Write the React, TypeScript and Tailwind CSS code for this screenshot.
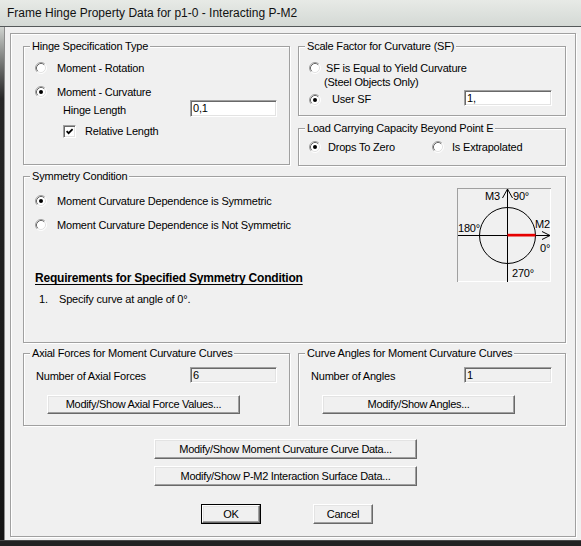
import React from 'react';

const Radio = ({ on = false, className = '' }: { on?: boolean; className?: string }) => (
  <svg width="12" height="12" viewBox="0 0 12 12" className={`shrink-0 ${className}`}>
    <circle cx="6" cy="6" r="5" fill="#ffffff" />
    <path d="M2.11 9.89A5.5 5.5 0 0 1 9.89 2.11" fill="none" stroke="#a0a0a0" />
    <path d="M9.89 2.11A5.5 5.5 0 0 1 2.11 9.89" fill="none" stroke="#ffffff" />
    <path d="M2.82 9.18A4.5 4.5 0 0 1 9.18 2.82" fill="none" stroke="#696969" />
    <path d="M9.18 2.82A4.5 4.5 0 0 1 2.82 9.18" fill="none" stroke="#e3e3e3" />
    {on && <circle cx="6" cy="6" r="2" fill="#000000" />}
  </svg>
);

const Check = ({ on = false }: { on?: boolean }) => (
  <span className="flex h-[13px] w-[13px] shrink-0 items-center justify-center border border-t-[#a0a0a0] border-l-[#a0a0a0] border-r-white border-b-white bg-white shadow-[inset_1px_1px_0_#696969,inset_-1px_-1px_0_#e3e3e3]">
    {on && (
      <svg width="7" height="7" viewBox="0 0 7 7">
        <path d="M0.6 3.2 L2.6 5.2 L6.6 1.2" fill="none" stroke="#000" strokeWidth="1.8" />
      </svg>
    )}
  </span>
);

const Edit = ({ value, className = '', ro = false }: { value: string; className?: string; ro?: boolean }) => (
  <div
    className={`flex shrink-0 items-center border border-t-[#a0a0a0] border-l-[#a0a0a0] border-r-white border-b-white pl-[2px] text-[11px] leading-[13px] shadow-[inset_1px_1px_0_#696969,inset_-1px_-1px_0_#e3e3e3] ${
      ro ? 'bg-[#f0f0f0]' : 'bg-white'
    } ${className}`}
  >
    {value}
  </div>
);

const Btn = ({ children, className = '' }: { children: React.ReactNode; className?: string }) => (
  <button
    className={`flex shrink-0 items-center justify-center border border-t-white border-l-white border-r-[#696969] border-b-[#696969] bg-[#f0f0f0] text-[11px] leading-[13px] tracking-[-0.3px] text-black shadow-[inset_-1px_-1px_0_#a0a0a0,inset_1px_1px_0_#e3e3e3] ${className}`}
  >
    {children}
  </button>
);

const Group = ({ title, className = '', children }: { title: string; className?: string; children?: React.ReactNode }) => (
  <div className={`relative shrink-0 border border-[#a0a0a0] shadow-[inset_1px_1px_0_#fff,1px_1px_0_#fff] ${className}`}>
    <span className="absolute left-[6px] top-[-7px] bg-[#f0f0f0] px-[2px] text-[11px] leading-[13px] whitespace-nowrap">{title}</span>
    {children}
  </div>
);

const Diagram = () => (
  <svg width="94" height="94" viewBox="0 0 94 94" className="mt-[11px] mr-[14px] shrink-0" fontFamily="Liberation Sans, Arial, sans-serif" fontSize="11">
    <line x1="0" y1="0.5" x2="94" y2="0.5" stroke="#a0a0a0" />
    <line x1="0.5" y1="0" x2="0.5" y2="94" stroke="#a0a0a0" />
    <line x1="93.5" y1="1" x2="93.5" y2="94" stroke="#ffffff" />
    <line x1="1" y1="93.5" x2="94" y2="93.5" stroke="#ffffff" />
    <line x1="50.5" y1="1" x2="50.5" y2="94" stroke="#000" />
    <path d="M45.5 10 L50.5 1 L55.5 10" fill="none" stroke="#000" />
    <line x1="1" y1="47.5" x2="93" y2="47.5" stroke="#000" />
    <path d="M85 43.5 L93 47.5 L85 51.5" fill="none" stroke="#000" />
    <circle cx="50.5" cy="47.5" r="28" fill="none" stroke="#000" />
    <rect x="50.5" y="45.8" width="28" height="2.7" fill="#e60000" />
    <text x="28" y="8" dominantBaseline="central">M3</text>
    <text x="56" y="8" dominantBaseline="central">90°</text>
    <text x="1" y="40" dominantBaseline="central">180°</text>
    <text x="78" y="36" dominantBaseline="central">M2</text>
    <text x="83" y="60" dominantBaseline="central">0°</text>
    <text x="55" y="85" dominantBaseline="central">270°</text>
  </svg>
);

export default function App() {
  return (
    <div className="flex h-[546px] w-[581px] flex-col overflow-hidden bg-[#1c1c1c] font-['Liberation_Sans',Arial,sans-serif] text-black">
      {/* title bar */}
      <div className="flex h-[27px] shrink-0 items-center border-b border-[#55595a] bg-linear-to-b from-[#e7eae6] to-[#d4d9d5] pl-[7px] text-[12px] text-[#111]">
        Frame Hinge Property Data for p1-0 - Interacting P-M2
      </div>

      <div className="flex h-[513px] shrink-0">
        <div className="w-[4px] bg-linear-to-b from-[#d0d4d0] via-[#262626] via-[14%] to-[#141414]" />
        <div className="flex-1 border-l border-[#8c8c8c] bg-[#f0f0f0] pt-[6px] pl-[5px] tracking-[-0.2px]">
          <div className="h-[504px] w-[566px] border border-[#a0a0a0] pt-[12px] pl-[12px] shadow-[inset_1px_1px_0_#fff,1px_1px_0_#fff]">
            {/* row 1 */}
            <div className="flex items-start gap-[8px]">
              <Group title="Hinge Specification Type" className="h-[119px] w-[267px]">
                <div className="flex flex-col pl-[11px] pr-[12px]">
                  <div className="mt-[13px] flex h-[16px] items-center">
                    <Radio />
                    <span className="ml-[10px] text-[11px] leading-[13px]">Moment - Rotation</span>
                  </div>
                  <div className="mt-[8px] flex h-[16px] items-center">
                    <Radio on />
                    <span className="ml-[10px] text-[11px] leading-[13px]">Moment - Curvature</span>
                  </div>
                  <div className="flex h-[17px] items-center">
                    <span className="ml-[28px] pt-[3px] text-[11px] leading-[13px]">Hinge Length</span>
                    <Edit value="0,1" className="ml-auto h-[17px] w-[87px]" />
                  </div>
                  <div className="mt-[8px] flex h-[13px] items-center">
                    <span className="ml-[28px]">
                      <Check on />
                    </span>
                    <span className="ml-[9px] text-[11px] leading-[13px]">Relative Length</span>
                  </div>
                </div>
              </Group>

              <div className="flex flex-col">
                <Group title="Scale Factor for Curvature (SF)" className="h-[70px] w-[268px]">
                  <div className="flex flex-col pl-[10px] pr-[13px]">
                    <div className="mt-[13px] flex h-[16px] items-center">
                      <Radio />
                      <span className="ml-[5px] text-[11px] leading-[13px]">SF is Equal to Yield Curvature</span>
                    </div>
                    <span className="ml-[15px] text-[11px] leading-[13px]">(Steel Objects Only)</span>
                    <div className="mt-[1px] flex h-[16px] items-start">
                      <Radio on className="mt-[4px]" />
                      <span className="ml-[11px] mt-[3px] text-[11px] leading-[13px]">User SF</span>
                      <Edit value="1," className="ml-auto h-[16px] w-[88px]" />
                    </div>
                  </div>
                </Group>
                <Group title="Load Carrying Capacity Beyond Point E" className="mt-[12px] h-[38px] w-[268px]">
                  <div className="mt-[10px] flex h-[16px] items-center pl-[10px]">
                    <div className="flex w-[123px] items-center">
                      <Radio on />
                      <span className="ml-[7px] text-[11px] leading-[13px]">Drops To Zero</span>
                    </div>
                    <Radio />
                    <span className="ml-[8px] text-[11px] leading-[13px]">Is Extrapolated</span>
                  </div>
                </Group>
              </div>
            </div>

            {/* symmetry */}
            <Group title="Symmetry Condition" className="mt-[10px] flex h-[167px] w-[543px]">
              <div className="flex flex-1 flex-col pl-[11px]">
                <div className="mt-[16px] flex h-[16px] items-center">
                  <Radio on />
                  <span className="ml-[10px] text-[11px] leading-[13px]">Moment Curvature Dependence is Symmetric</span>
                </div>
                <div className="mt-[8px] flex h-[16px] items-center">
                  <Radio />
                  <span className="ml-[10px] text-[11px] leading-[13px]">Moment Curvature Dependence is Not Symmetric</span>
                </div>
                <span className="mt-[38px] self-start text-[12px] font-bold leading-[15px] underline underline-offset-[2px]">
                  Requirements for Specified Symmetry Condition
                </span>
                <div className="mt-[7px] flex text-[11px] leading-[13px]">
                  <span className="ml-[4px] w-[20px]">1.</span>
                  <span>Specify curve at angle of 0°.</span>
                </div>
              </div>
              <Diagram />
            </Group>

            {/* row 3 */}
            <div className="mt-[10px] flex items-start gap-[8px]">
              <Group title="Axial Forces for Moment Curvature Curves" className="h-[73px] w-[267px]">
                <div className="flex flex-col pl-[12px] pr-[12px]">
                  <div className="mt-[13px] flex h-[16px] items-center">
                    <span className="pt-[3px] text-[11px] leading-[13px]">Number of Axial Forces</span>
                    <Edit value="6" ro className="ml-auto h-[16px] w-[87px]" />
                  </div>
                  <Btn className="mt-[12px] ml-[11px] h-[19px] w-[193px]">Modify/Show Axial Force Values...</Btn>
                </div>
              </Group>
              <Group title="Curve Angles for Moment Curvature Curves" className="h-[73px] w-[268px]">
                <div className="flex flex-col pl-[12px] pr-[13px]">
                  <div className="mt-[13px] flex h-[16px] items-center">
                    <span className="pt-[3px] text-[11px] leading-[13px]">Number of Angles</span>
                    <Edit value="1" ro className="ml-auto h-[16px] w-[88px]" />
                  </div>
                  <Btn className="mt-[12px] ml-[11px] h-[19px] w-[193px]">Modify/Show Angles...</Btn>
                </div>
              </Group>
            </div>

            {/* bottom buttons */}
            <div className="flex flex-col">
              <Btn className="mt-[13px] ml-[131px] h-[20px] w-[263px]">Modify/Show Moment Curvature Curve Data...</Btn>
              <Btn className="mt-[7px] ml-[131px] h-[20px] w-[263px]">Modify/Show P-M2 Interaction Surface Data...</Btn>
              <div className="mt-[18px] flex">
                <div className="ml-[178px] h-[20px] w-[60px] border border-black">
                  <Btn className="h-full w-full">OK</Btn>
                </div>
                <Btn className="ml-[52px] h-[20px] w-[60px]">Cancel</Btn>
              </div>
            </div>
          </div>
        </div>
      </div>

      <div className="h-[6px] shrink-0 border-t border-[#4a4a4a] bg-[#222]" />
    </div>
  );
}
